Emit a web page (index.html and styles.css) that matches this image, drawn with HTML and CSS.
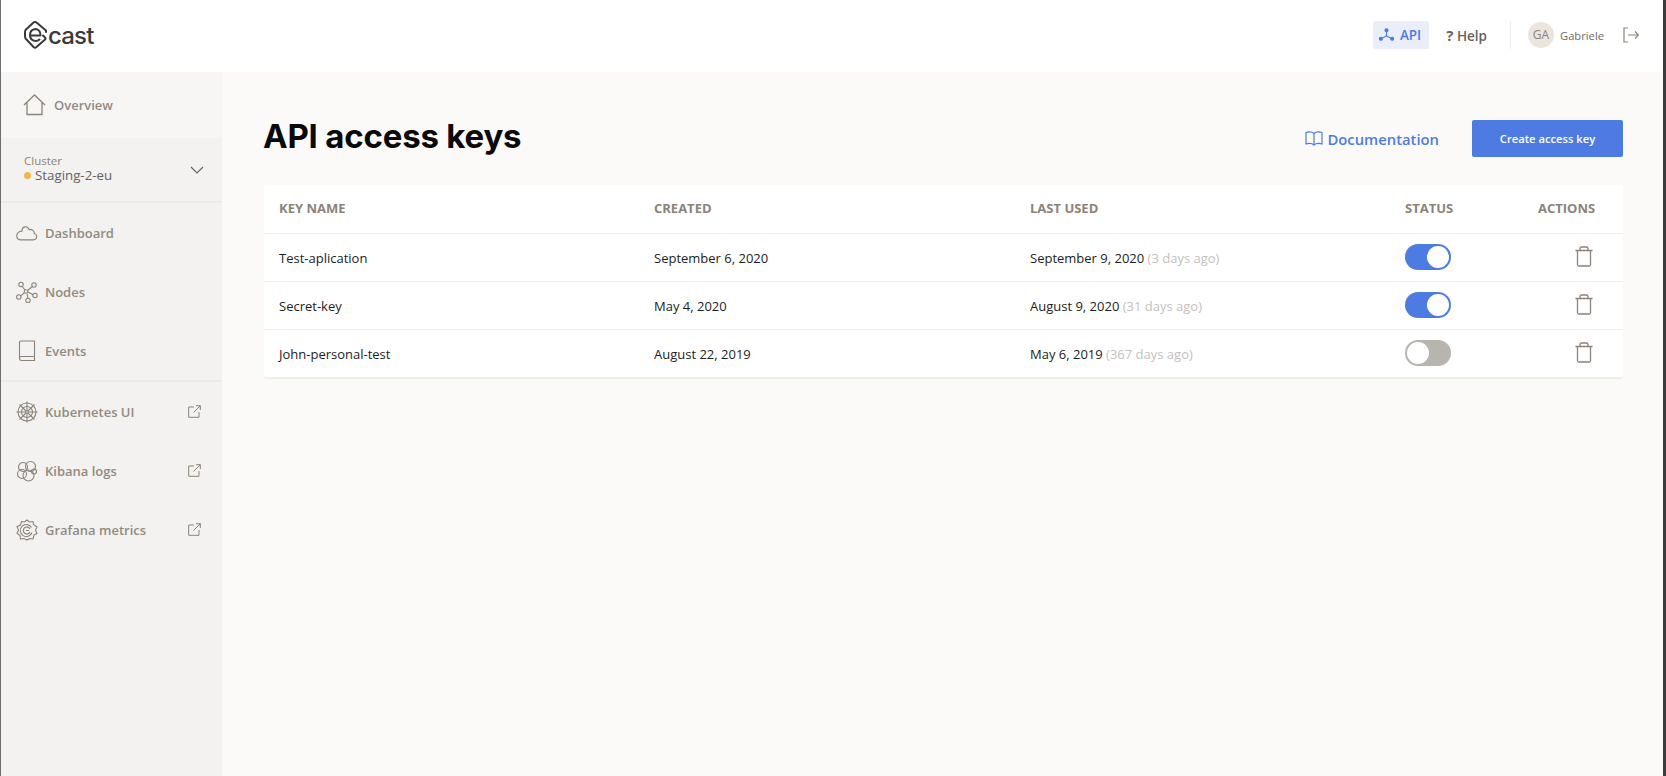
FILE: index.html
```html
<!DOCTYPE html>
<html>
<head>
  <meta charset="utf-8">
  <title>API access keys</title>
  <link rel="stylesheet" href="styles.css">
</head>
<body>
<div id="app">
  <header class="topbar">
    <a class="logo">
      <svg width="23" height="28" viewBox="0 0 23 28" fill="none" stroke="#3a3a3a" stroke-width="2" stroke-linejoin="round" stroke-linecap="round">
        <path d="M22 11 V9.500 L12.500 1.500 Q11 0.500 9.500 1.500 L2 8.500 Q1 9.500 1 11 V15.500 Q1 17 2 18 L9.500 26 Q11 27.200 12.500 26 L21 18.500 Q22 17.500 21 16.500 L19 14.500"/>
        <path d="M6.500 14.500 H16.500 Q16.500 8.500 11.500 8 Q6 8.500 6 14 Q6 19.500 11.500 20 Q14 20 15.500 18.500"/>
      </svg>
      <span class="logo-text">cast</span>
    </a>
    <div class="topbar-right">
      <a class="top-api">
        <svg width="15" height="14" viewBox="0 0 16 14" fill="#4e7be2" stroke="#4e7be2" stroke-width="1.2">
          <circle cx="8" cy="2" r="1.6"/><circle cx="2" cy="11" r="1.6"/><circle cx="14" cy="11" r="1.6"/>
          <path fill="none" d="M8 2 V8 L2 11 M8 8 L14 11"/>
        </svg>
        API
      </a>
      <a class="top-help"><b>?</b> Help</a>
      <div class="top-divider"></div>
      <div class="avatar">GA</div>
      <span class="username">Gabriele</span>
      <svg class="logout" width="16" height="16" viewBox="0 0 16 16" fill="none" stroke="#8c8378" stroke-width="1.2">
        <path d="M5 1 H1 V15 H5 M5 8 H15.500 M12 4.500 L15.500 8 L12 11.500"/>
      </svg>
    </div>
  </header>

  <div class="body-wrap">
    <aside class="sidebar">
      <a class="overview">
        <svg width="23" height="22" viewBox="0 0 23 22" fill="none" stroke="#8c8378" stroke-width="1.3">
          <path d="M1 11 L11.500 1 L22 11 M4 9 V20.500 H19 V9"/>
        </svg>
        Overview
      </a>
      <div class="cluster">
        <div class="cluster-text">
          <div class="cluster-label">Cluster</div>
          <div class="cluster-name"><span class="dot"></span>Staging-2-eu</div>
        </div>
        <svg width="14" height="8" viewBox="0 0 14 8" fill="none" stroke="#6b655d" stroke-width="1.2"><path d="M1 1 L7 7 L13 1"/></svg>
      </div>
      <nav class="nav-group">
        <a class="nav-item">
          <svg class="nav-icon" width="22" height="16" viewBox="0 0 24 17" fill="none" stroke="#8c8378" stroke-width="1.2">
            <path d="M5 16 H19 C23 16 24 10 20 9 C20 5 16 4 14.500 5 C12 0 6.500 1 6.500 6.500 C3 6.500 0 9 1 13 C1.500 15 3 16 5 16 Z"/>
          </svg>
          Dashboard
        </a>
        <a class="nav-item">
          <svg class="nav-icon" width="22" height="22" viewBox="0 0 22 22" fill="none" stroke="#8c8378" stroke-width="1.1">
            <circle cx="5" cy="3.500" r="2.200"/><circle cx="18" cy="4" r="2.200"/><circle cx="2.800" cy="16" r="2.200"/><circle cx="12" cy="19.500" r="2.200"/><circle cx="19" cy="14.500" r="2.200"/><circle cx="10" cy="10.500" r="1.800"/>
            <path d="M6.200 5.500 L9 9 M16.500 5.500 L11.500 9.500 M4.800 14.800 L8.500 11.500 M11 12.500 L12 17.500 M12 11 L17 13.800"/>
          </svg>
          Nodes
        </a>
        <a class="nav-item">
          <svg class="nav-icon" width="22" height="22" viewBox="0 0 22 22" fill="none" stroke="#8c8378" stroke-width="1.1">
            <path d="M3.500 18 V2 C3.500 1.500 4 1 4.500 1 H18.500 V20.500 H5.500 C4 20.500 3.500 19.500 3.500 18 C3.500 17 4 16.500 5.500 16.500 H18.500"/>
          </svg>
          Events
        </a>
      </nav>
      <nav class="nav-group">
        <a class="nav-item">
          <svg class="nav-icon" width="22" height="22" viewBox="0 0 22 22" fill="none" stroke="#8c8378" stroke-width="1.1">
            <circle cx="11" cy="11" r="9"/><circle cx="11" cy="11" r="5.500"/><circle cx="11" cy="11" r="1.300"/>
            <path d="M11 0.500 V9.500 M11 12.500 V21.500 M0.500 11 H9.500 M12.500 11 H21.500 M3.500 3.500 L10 10 M12 12 L18.500 18.500 M18.500 3.500 L12 10 M10 12 L3.500 18.500"/>
          </svg>
          Kubernetes UI
          <svg class="ext" width="13" height="13" viewBox="0 0 13 13" fill="none" stroke="#8c8378" stroke-width="1"><path d="M6 2 H0.700 V12.300 H11 V7 M5.500 7.500 L12.300 0.700 M8 0.700 H12.300 V5"/></svg>
        </a>
        <a class="nav-item">
          <svg class="nav-icon" width="22" height="22" viewBox="0 0 22 22" fill="none" stroke="#8c8378" stroke-width="1.1">
            <circle cx="7" cy="7" r="4.500"/><circle cx="14.500" cy="6.500" r="5"/><circle cx="6" cy="14" r="4.500"/><circle cx="12.500" cy="15.500" r="5.500"/><circle cx="18" cy="11.500" r="2.500"/>
          </svg>
          Kibana logs
          <svg class="ext" width="13" height="13" viewBox="0 0 13 13" fill="none" stroke="#8c8378" stroke-width="1"><path d="M6 2 H0.700 V12.300 H11 V7 M5.500 7.500 L12.300 0.700 M8 0.700 H12.300 V5"/></svg>
        </a>
        <a class="nav-item">
          <svg class="nav-icon" width="22" height="22" viewBox="0 0 22 22" fill="none" stroke="#8c8378" stroke-width="1.1">
            <path d="M11 1 L13.500 3 L17 2.500 L17.500 5.500 L21 8 L19.500 11 L21 14.500 L18 16 L17 20 L13.500 19.500 L11 21 L8 19.500 L4.500 20 L4 16.500 L1 14 L2.500 11 L1 7.500 L4.500 6 L5.500 2.500 L8.500 3 Z"/>
            <path d="M15.500 8.500 A6 6 0 1 0 16 13.500 M14 10 A3.500 3.500 0 1 0 14 13 M10 11.500 H13"/>
          </svg>
          Grafana metrics
          <svg class="ext" width="13" height="13" viewBox="0 0 13 13" fill="none" stroke="#8c8378" stroke-width="1"><path d="M6 2 H0.700 V12.300 H11 V7 M5.500 7.500 L12.300 0.700 M8 0.700 H12.300 V5"/></svg>
        </a>
      </nav>
    </aside>

    <main class="content">
      <div class="content-head">
        <h1>API access keys</h1>
        <a class="docs">
          <svg width="18" height="15" viewBox="0 0 18 15" fill="none" stroke="#4e7be2" stroke-width="1.2">
            <path d="M9 2.500 C7 0.800 3.500 0.800 1 1.500 V13 C3.500 12.300 7 12.300 9 14 C11 12.300 14.500 12.300 17 13 V1.500 C14.500 0.800 11 0.800 9 2.500 V14"/>
          </svg>
          Documentation
        </a>
        <a class="btn-create">Create access key</a>
      </div>

      <div class="keys-table">
        <div class="row row-head">
          <div>KEY NAME</div>
          <div>CREATED</div>
          <div>LAST USED</div>
          <div>STATUS</div>
          <div class="cell-actions">ACTIONS</div>
        </div>
        <div class="row">
          <div>Test-aplication</div>
          <div>September 6, 2020</div>
          <div>September 9, 2020 <span class="muted">(3 days ago)</span></div>
          <div><span class="toggle on"></span></div>
          <div class="cell-actions"><svg class="trash" width="18" height="21" viewBox="0 0 18 21" fill="none" stroke="#8c8378" stroke-width="1.300"><path d="M0.500 4.500 H17.500 M2.500 4.500 V18.500 C2.500 19.500 3 20 4 20 H14 C15 20 15.500 19.500 15.500 18.500 V4.500 M5 4.500 V2.500 C5 1.500 5.500 1 6.500 1 H11.500 C12.500 1 13 1.500 13 2.500 V4.500"/></svg></div>
        </div>
        <div class="row">
          <div>Secret-key</div>
          <div>May 4, 2020</div>
          <div>August 9, 2020 <span class="muted">(31 days ago)</span></div>
          <div><span class="toggle on"></span></div>
          <div class="cell-actions"><svg class="trash" width="18" height="21" viewBox="0 0 18 21" fill="none" stroke="#8c8378" stroke-width="1.300"><path d="M0.500 4.500 H17.500 M2.500 4.500 V18.500 C2.500 19.500 3 20 4 20 H14 C15 20 15.500 19.500 15.500 18.500 V4.500 M5 4.500 V2.500 C5 1.500 5.500 1 6.500 1 H11.500 C12.500 1 13 1.500 13 2.500 V4.500"/></svg></div>
        </div>
        <div class="row">
          <div>John-personal-test</div>
          <div>August 22, 2019</div>
          <div>May 6, 2019 <span class="muted">(367 days ago)</span></div>
          <div><span class="toggle"></span></div>
          <div class="cell-actions"><svg class="trash" width="18" height="21" viewBox="0 0 18 21" fill="none" stroke="#8c8378" stroke-width="1.300"><path d="M0.500 4.500 H17.500 M2.500 4.500 V18.500 C2.500 19.500 3 20 4 20 H14 C15 20 15.500 19.500 15.500 18.500 V4.500 M5 4.500 V2.500 C5 1.500 5.500 1 6.500 1 H11.500 C12.500 1 13 1.500 13 2.500 V4.500"/></svg></div>
        </div>
      </div>
    </main>
  </div>
</div>
</body>
</html>
```

FILE: styles.css
```css
html, body {
  height: 100%;
  margin: 0;
  overflow: hidden;
}

body {
  font-family: "Open Sans", sans-serif;
  background: #fff;
}

#app {
  height: 100%;
  display: flex;
  flex-direction: column;
  box-sizing: border-box;
  border-left: 1px solid #6e6e6e;
  border-right: 3px solid #3c3c3c;
}

.topbar {
  height: 72px;
  flex: none;
  box-sizing: border-box;
  display: flex;
  align-items: center;
  justify-content: space-between;
  padding: 0 24px 2px 23px;
  background: #fff;
}

.logo {
  display: flex;
  align-items: center;
  gap: 1px;
}

.logo-text {
  font-family: Inter, sans-serif;
  font-size: 24px;
  font-weight: 500;
  color: #3a3a3a;
  letter-spacing: -0.8px;
}

.topbar-right {
  display: flex;
  align-items: center;
  font-size: 13.500px;
}

.top-api {
  display: flex;
  align-items: center;
  gap: 6px;
  height: 28px;
  padding: 0 8px 0 6px;
  background: #e9eef8;
  border-radius: 3px;
  color: #4e7be2;
  font-weight: 600;
}

.top-help {
  margin-left: 17px;
  font-weight: 600;
  color: #66625c;
}

.top-help b {
  font-weight: 700;
  font-size: 15px;
}

.top-divider {
  width: 1px;
  height: 28px;
  background: #f0eeeb;
  margin: 0 17px 0 23px;
}

.avatar {
  width: 26px;
  height: 26px;
  border-radius: 50%;
  background: #ebe5de;
  color: #8c8378;
  font-size: 12px;
  line-height: 26px;
  text-align: center;
}

.username {
  margin-left: 6px;
  font-size: 11.200px;
  color: #6f6b65;
}

.logout {
  margin-left: 19px;
}

.body-wrap {
  flex: 1;
  display: flex;
  min-height: 0;
}

.sidebar {
  width: 221px;
  flex: none;
  background: #f3f2f0;
  color: #928a7f;
  font-size: 13px;
  font-weight: 600;
}

.overview {
  height: 65px;
  padding: 0 0 1px 22px;
  display: flex;
  align-items: center;
  gap: 8px;
  background: #f7f6f4;
}

.cluster {
  height: 63px;
  display: flex;
  align-items: center;
  justify-content: space-between;
  padding: 0 18px 0 23px;
  border-bottom: 2px solid #ecebe8;
}

.cluster-text {
  padding-bottom: 3px;
}

.cluster-label {
  font-size: 11.500px;
  font-weight: 400;
  line-height: 14px;
  color: #8c8378;
}

.cluster-name {
  font-size: 13.300px;
  font-weight: 400;
  line-height: 15px;
  color: #66625c;
  display: flex;
  align-items: center;
}

.dot {
  width: 7px;
  height: 7px;
  border-radius: 50%;
  background: #f2b84b;
  margin-right: 4px;
}

.nav-group {
  height: 177px;
  border-bottom: 2px solid #ecebe8;
}

.nav-group:last-child {
  border-bottom: 0;
}

.nav-item {
  height: 59px;
  display: flex;
  align-items: center;
  padding-left: 15px;
  gap: 7px;
}

.nav-icon {
  flex: none;
}

.ext {
  margin-left: auto;
  margin-right: 21px;
}

.content {
  flex: 1;
  min-width: 0;
  padding: 0 40px 0 42px;
  background: #fbfaf8;
}

.content-head {
  display: flex;
  align-items: center;
  padding: 48px 0 28px;
}

h1 {
  margin: 0 auto 0 -1px;
  padding-bottom: 4px;
  font-family: Inter, sans-serif;
  font-size: 33px;
  line-height: 33px;
  font-weight: 700;
  letter-spacing: -0.2px;
  color: #0a0a0a;
}

.docs {
  display: flex;
  align-items: center;
  gap: 4px;
  font-size: 14.800px;
  font-weight: 600;
  color: #4e7be2;
}

.btn-create {
  margin-left: 33px;
  width: 151px;
  height: 37px;
  line-height: 37px;
  text-align: center;
  background: #4e7be2;
  border-radius: 2px;
  color: #fff;
  font-size: 11.200px;
  font-weight: 600;
}

.keys-table {
  background: #fff;
  border-radius: 3px;
  box-shadow: 0 1px 0 #ecebe8;
}

.row {
  display: grid;
  grid-template-columns: 375px 376px 375px 133px 1fr;
  align-items: center;
  height: 47px;
  padding: 0 28px 0 15px;
  border-bottom: 1px solid #f0efec;
  font-size: 13px;
  color: #1d1d1d;
}

.row-head {
  height: 46px;
  padding-bottom: 2px;
  font-weight: 700;
  color: #8c8378;
}

.cell-actions {
  text-align: right;
}

.muted {
  color: #c4c1bc;
}

.toggle {
  display: block;
  position: relative;
  width: 46px;
  height: 26px;
  margin-bottom: 2px;
  box-sizing: border-box;
  border-radius: 13px;
  background: #b8b5af;
}

.toggle::after {
  content: "";
  position: absolute;
  top: 2px;
  left: 2px;
  width: 22px;
  height: 22px;
  border-radius: 50%;
  background: #fff;
}

.toggle.on {
  background: #4e7be2;
}

.toggle.on::after {
  left: 22px;
}

.trash {
  display: block;
  margin: 0 2px 2px auto;
}
```
